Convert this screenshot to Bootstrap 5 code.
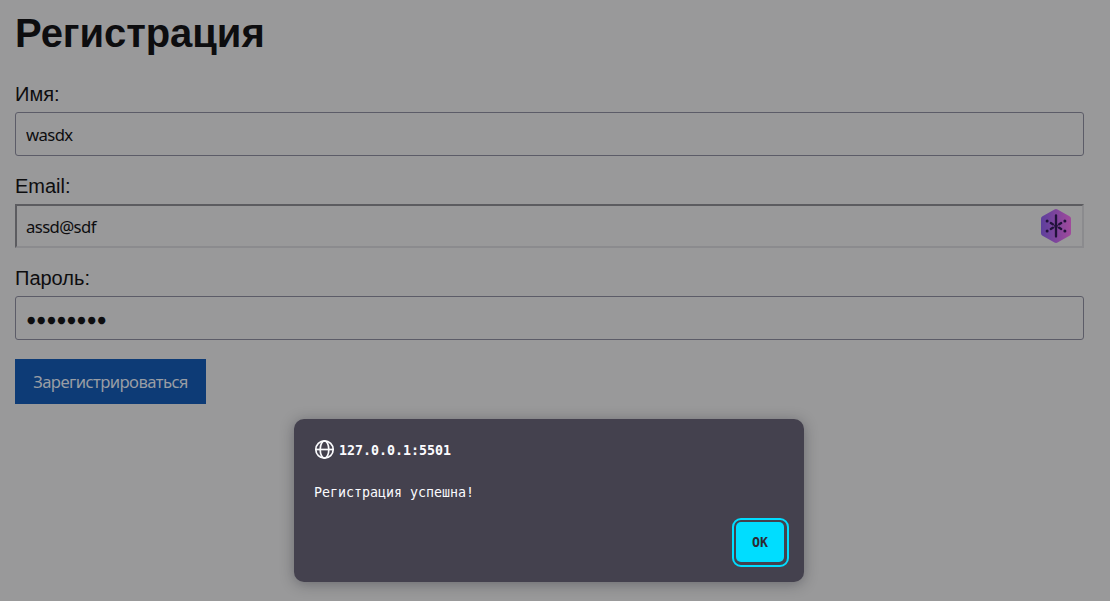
<!DOCTYPE html>
<html lang="ru">
<head>
<meta charset="utf-8">
<meta name="viewport" content="width=device-width, initial-scale=1">
<title>Регистрация</title>
<link href="https://cdn.jsdelivr.net/npm/bootstrap@5.3.0/dist/css/bootstrap.min.css" rel="stylesheet">
<style>
body { background: #99999a; color: #0d0d0f; font: 20px/23px "Liberation Sans", sans-serif; height: 601px; overflow: hidden; }
main { padding: 10px 26px 0 15px; }
h1.page-title { font-size: 40px; line-height: 46px; font-weight: 700; margin: 0 0 27px; color: #0d0d0f; letter-spacing: -.05px; }
.form-label { margin: 0 0 6px; display: block; }
.form-control, .form-control:focus { height: 44px; padding: 1px 10px 0; background: transparent; color: #0d0d0f; border: 1px solid #5c5c68; border-radius: 3px; font: 16.7px "Noto Sans", sans-serif; letter-spacing: -.6px; box-shadow: none; }
.form-control.plain { border: 2px solid; border-color: #5c5c60 #8b8b8e #8b8b8e #5c5c60; border-radius: 0; padding-left: 9px; }
.form-control.secret { font: 9.6px "DejaVu Sans", sans-serif; letter-spacing: 1.7px; padding: 2px 10px 0 11px; }
.field { margin-bottom: 19px; }
.field-icon { position: absolute; right: 12px; top: 5px; }
.submit-btn { display: block; width: 191px; height: 45px; padding: 0; border: 0; border-radius: 0; background: #0d3b76; color: #999da4; font: 16.7px "Noto Sans", sans-serif; letter-spacing: -.6px; }
.alert-box { position: absolute; left: 294px; top: 419px; width: 510px; height: 163px; background: #44414e; color: #fbfbfe; border-radius: 10px; box-shadow: 0 2px 14px rgba(30,30,40,.38); font: 13.3px/16px "DejaVu Sans Mono", monospace; padding: 20px 15px 15px 20px; }
.host { padding-top: 2px; }
.message { margin-top: 25px; }
.ok-btn { width: 57px; height: 49px; padding: 2px 2px 3px; border: 2px solid #00ddff; border-radius: 9px; font: 700 13.3px "DejaVu Sans Mono", monospace; }
.ok-btn span { display: flex; width: 48px; height: 40px; align-items: center; justify-content: center; border-radius: 5px; background: #00ddff; color: #2b2a33; padding-top: 1px; }
</style>
</head>
<body>
<main>
  <h1 class="page-title">Регистрация</h1>
  <form>
    <div class="field">
      <label class="form-label" for="name">Имя:</label>
      <input class="form-control" id="name" type="text" value="wasdx">
    </div>
    <div class="field">
      <label class="form-label" for="email">Email:</label>
      <div class="position-relative">
        <input class="form-control plain" id="email" type="text" value="assd@sdf">
        <svg class="field-icon" width="32" height="34" viewBox="0 0 32 34" aria-hidden="true">
          <defs><linearGradient id="mask" x1="0" x2="1"><stop stop-color="#5d3f9c"/><stop offset="1" stop-color="#a04a9c"/></linearGradient></defs>
          <path d="M14.5.4Q16-.3 17.5.4L29.5 7.2Q31 8 31 9.700V24.300Q31 26 29.500 26.800L17.500 33.600Q16 34.300 14.500 33.600L2.500 26.800Q1 26 1 24.300V9.700Q1 8 2.500 7.200Z" fill="url(#mask)"/>
          <g stroke="#20123a" stroke-width="2.3" stroke-linecap="round"><path d="M16 6.500V27.500"/><path d="M12.800 15.200L10.800 14M12.800 18.800L10.800 20M19.200 15.200L21.200 14M19.200 18.800L21.200 20"/></g>
          <path d="M13 15.500L19 18.700M13 18.700L19 15.500" stroke="#20123a" stroke-width="1"/>
          <g fill="#20123a"><circle cx="7.100" cy="12" r="1.500"/><circle cx="7.100" cy="22" r="1.500"/><circle cx="24.900" cy="12" r="1.500"/><circle cx="24.900" cy="22" r="1.500"/></g>
        </svg>
      </div>
    </div>
    <div class="field">
      <label class="form-label" for="password">Пароль:</label>
      <input class="form-control secret" id="password" type="text" value="●●●●●●●●">
    </div>
    <button class="btn submit-btn" type="button">Зарегистрироваться</button>
  </form>
</main>
<div class="alert-box d-flex flex-column" role="alertdialog">
  <div class="d-flex align-items-center fw-bold gap-1">
    <svg width="21" height="21" viewBox="0 0 21 21" fill="none" stroke="#fbfbfe" stroke-width="1.700" aria-hidden="true"><circle cx="10.500" cy="10.500" r="8.700"/><ellipse cx="10.500" cy="10.500" rx="4.300" ry="8.700"/><path d="M1.800 10.500H19.200"/></svg>
    <span class="host">127.0.0.1:5501</span>
  </div>
  <div class="message">Регистрация успешна!</div>
  <button class="btn ok-btn mt-auto ms-auto" type="button"><span>OK</span></button>
</div>
<script src="https://cdn.jsdelivr.net/npm/bootstrap@5.3.0/dist/js/bootstrap.bundle.min.js"></script>
</body>
</html>
